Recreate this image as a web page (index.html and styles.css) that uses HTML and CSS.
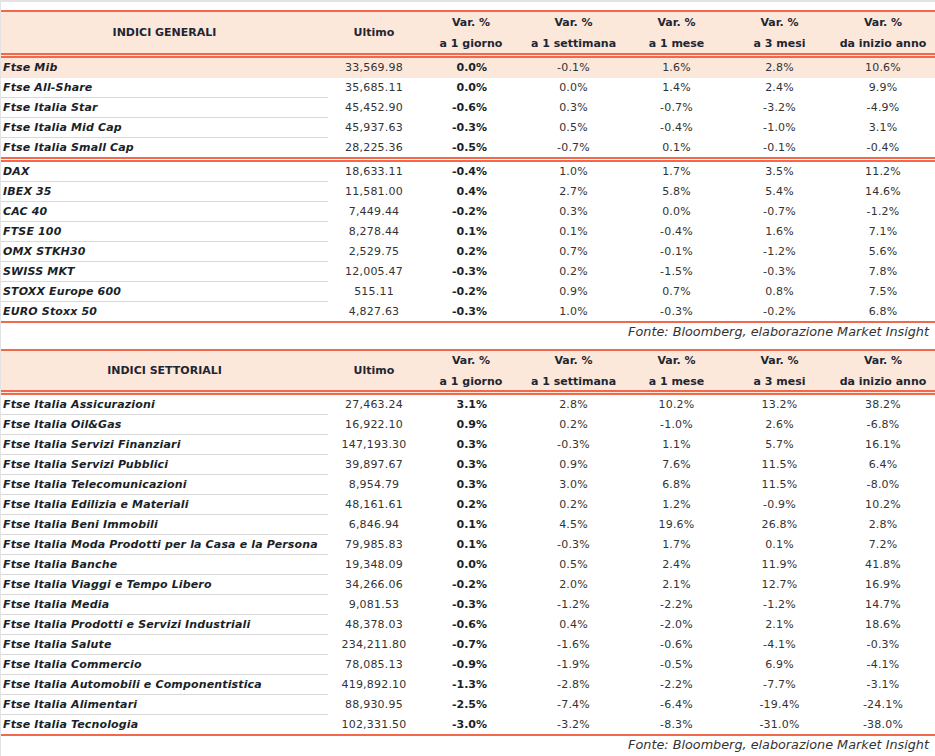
FILE: index.html
```html
<!DOCTYPE html>
<html lang="it">
<head>
<meta charset="utf-8">
<title>Indici</title>
<link rel="stylesheet" href="styles.css">
</head>
<body>
<div class="page">
  <table class="idx">
    <colgroup>
      <col class="c-name"><col class="c-last"><col class="c-d1"><col class="c-w"><col class="c-m"><col class="c-m"><col class="c-y">
    </colgroup>
    <thead>
      <tr>
        <th><div class="hd">INDICI GENERALI</div></th>
        <th><div class="hd">Ultimo</div></th>
        <th><div class="hd"><span>Var. %</span><span>a 1 giorno</span></div></th>
        <th><div class="hd"><span>Var. %</span><span>a 1 settimana</span></div></th>
        <th><div class="hd"><span>Var. %</span><span>a 1 mese</span></div></th>
        <th><div class="hd"><span>Var. %</span><span>a 3 mesi</span></div></th>
        <th><div class="hd"><span>Var. %</span><span>da inizio anno</span></div></th>
      </tr>
    </thead>
    <tbody>
      <tr class="hl"><td class="name">Ftse Mib</td><td>33,569.98</td><td class="d1">0.0%</td><td>-0.1%</td><td>1.6%</td><td>2.8%</td><td>10.6%</td></tr>
      <tr><td class="name">Ftse All-Share</td><td>35,685.11</td><td class="d1">0.0%</td><td>0.0%</td><td>1.4%</td><td>2.4%</td><td>9.9%</td></tr>
      <tr><td class="name">Ftse Italia Star</td><td>45,452.90</td><td class="d1">-0.6%</td><td>0.3%</td><td>-0.7%</td><td>-3.2%</td><td>-4.9%</td></tr>
      <tr><td class="name">Ftse Italia Mid Cap</td><td>45,937.63</td><td class="d1">-0.3%</td><td>0.5%</td><td>-0.4%</td><td>-1.0%</td><td>3.1%</td></tr>
      <tr class="end"><td class="name">Ftse Italia Small Cap</td><td>28,225.36</td><td class="d1">-0.5%</td><td>-0.7%</td><td>0.1%</td><td>-0.1%</td><td>-0.4%</td></tr>
      <tr><td class="name">DAX</td><td>18,633.11</td><td class="d1">-0.4%</td><td>1.0%</td><td>1.7%</td><td>3.5%</td><td>11.2%</td></tr>
      <tr><td class="name">IBEX 35</td><td>11,581.00</td><td class="d1">0.4%</td><td>2.7%</td><td>5.8%</td><td>5.4%</td><td>14.6%</td></tr>
      <tr><td class="name">CAC 40</td><td>7,449.44</td><td class="d1">-0.2%</td><td>0.3%</td><td>0.0%</td><td>-0.7%</td><td>-1.2%</td></tr>
      <tr><td class="name">FTSE 100</td><td>8,278.44</td><td class="d1">0.1%</td><td>0.1%</td><td>-0.4%</td><td>1.6%</td><td>7.1%</td></tr>
      <tr><td class="name">OMX STKH30</td><td>2,529.75</td><td class="d1">0.2%</td><td>0.7%</td><td>-0.1%</td><td>-1.2%</td><td>5.6%</td></tr>
      <tr><td class="name">SWISS MKT</td><td>12,005.47</td><td class="d1">-0.3%</td><td>0.2%</td><td>-1.5%</td><td>-0.3%</td><td>7.8%</td></tr>
      <tr><td class="name">STOXX Europe 600</td><td>515.11</td><td class="d1">-0.2%</td><td>0.9%</td><td>0.7%</td><td>0.8%</td><td>7.5%</td></tr>
      <tr class="last"><td class="name">EURO Stoxx 50</td><td>4,827.63</td><td class="d1">-0.3%</td><td>1.0%</td><td>-0.3%</td><td>-0.2%</td><td>6.8%</td></tr>
    </tbody>
  </table>
  <p class="source">Fonte: Bloomberg, elaborazione Market Insight</p>

  <table class="idx idx2">
    <colgroup>
      <col class="c-name"><col class="c-last"><col class="c-d1"><col class="c-w"><col class="c-m"><col class="c-m"><col class="c-y">
    </colgroup>
    <thead>
      <tr>
        <th><div class="hd">INDICI SETTORIALI</div></th>
        <th><div class="hd">Ultimo</div></th>
        <th><div class="hd"><span>Var. %</span><span>a 1 giorno</span></div></th>
        <th><div class="hd"><span>Var. %</span><span>a 1 settimana</span></div></th>
        <th><div class="hd"><span>Var. %</span><span>a 1 mese</span></div></th>
        <th><div class="hd"><span>Var. %</span><span>a 3 mesi</span></div></th>
        <th><div class="hd"><span>Var. %</span><span>da inizio anno</span></div></th>
      </tr>
    </thead>
    <tbody>
      <tr><td class="name">Ftse Italia Assicurazioni</td><td>27,463.24</td><td class="d1">3.1%</td><td>2.8%</td><td>10.2%</td><td>13.2%</td><td>38.2%</td></tr>
      <tr><td class="name">Ftse Italia Oil&amp;Gas</td><td>16,922.10</td><td class="d1">0.9%</td><td>0.2%</td><td>-1.0%</td><td>2.6%</td><td>-6.8%</td></tr>
      <tr><td class="name">Ftse Italia Servizi Finanziari</td><td>147,193.30</td><td class="d1">0.3%</td><td>-0.3%</td><td>1.1%</td><td>5.7%</td><td>16.1%</td></tr>
      <tr><td class="name">Ftse Italia Servizi Pubblici</td><td>39,897.67</td><td class="d1">0.3%</td><td>0.9%</td><td>7.6%</td><td>11.5%</td><td>6.4%</td></tr>
      <tr><td class="name">Ftse Italia Telecomunicazioni</td><td>8,954.79</td><td class="d1">0.3%</td><td>3.0%</td><td>6.8%</td><td>11.5%</td><td>-8.0%</td></tr>
      <tr><td class="name">Ftse Italia Edilizia e Materiali</td><td>48,161.61</td><td class="d1">0.2%</td><td>0.2%</td><td>1.2%</td><td>-0.9%</td><td>10.2%</td></tr>
      <tr><td class="name">Ftse Italia Beni Immobili</td><td>6,846.94</td><td class="d1">0.1%</td><td>4.5%</td><td>19.6%</td><td>26.8%</td><td>2.8%</td></tr>
      <tr><td class="name">Ftse Italia Moda Prodotti per la Casa e la Persona</td><td>79,985.83</td><td class="d1">0.1%</td><td>-0.3%</td><td>1.7%</td><td>0.1%</td><td>7.2%</td></tr>
      <tr><td class="name">Ftse Italia Banche</td><td>19,348.09</td><td class="d1">0.0%</td><td>0.5%</td><td>2.4%</td><td>11.9%</td><td>41.8%</td></tr>
      <tr><td class="name">Ftse Italia Viaggi e Tempo Libero</td><td>34,266.06</td><td class="d1">-0.2%</td><td>2.0%</td><td>2.1%</td><td>12.7%</td><td>16.9%</td></tr>
      <tr><td class="name">Ftse Italia Media</td><td>9,081.53</td><td class="d1">-0.3%</td><td>-1.2%</td><td>-2.2%</td><td>-1.2%</td><td>14.7%</td></tr>
      <tr><td class="name">Ftse Italia Prodotti e Servizi Industriali</td><td>48,378.03</td><td class="d1">-0.6%</td><td>0.4%</td><td>-2.0%</td><td>2.1%</td><td>18.6%</td></tr>
      <tr><td class="name">Ftse Italia Salute</td><td>234,211.80</td><td class="d1">-0.7%</td><td>-1.6%</td><td>-0.6%</td><td>-4.1%</td><td>-0.3%</td></tr>
      <tr><td class="name">Ftse Italia Commercio</td><td>78,085.13</td><td class="d1">-0.9%</td><td>-1.9%</td><td>-0.5%</td><td>6.9%</td><td>-4.1%</td></tr>
      <tr><td class="name">Ftse Italia Automobili e Componentistica</td><td>419,892.10</td><td class="d1">-1.3%</td><td>-2.8%</td><td>-2.2%</td><td>-7.7%</td><td>-3.1%</td></tr>
      <tr><td class="name">Ftse Italia Alimentari</td><td>88,930.95</td><td class="d1">-2.5%</td><td>-7.4%</td><td>-6.4%</td><td>-19.4%</td><td>-24.1%</td></tr>
      <tr class="last"><td class="name">Ftse Italia Tecnologia</td><td>102,331.50</td><td class="d1">-3.0%</td><td>-3.2%</td><td>-8.3%</td><td>-31.0%</td><td>-38.0%</td></tr>
    </tbody>
  </table>
  <p class="source">Fonte: Bloomberg, elaborazione Market Insight</p>
</div>
</body>
</html>
```

FILE: styles.css
```css
html, body {
  margin: 0;
  padding: 0;
  background: #ffffff;
}

.page {
  width: 934px;
  height: 754px;
  border-top: 2px solid #e3e3e3;
  border-left: 1px solid #e3e3e3;
  padding-top: 8px;
  font-family: "DejaVu Sans", "Liberation Sans", sans-serif;
  font-size: 11px;
  color: #2a2a2a;
  overflow: hidden;
}

.idx {
  width: 934px;
  table-layout: fixed;
  border-collapse: separate;
  border-spacing: 0;
}

.c-name { width: 327px; }
.c-last { width: 92px; }
.c-d1 { width: 102px; }
.c-w { width: 103px; }
.c-m { width: 103px; }
.c-y { width: 104px; }

.idx th {
  background: #fce8da;
  border-top: 2px solid #f2684c;
  border-bottom: 5px double #f2684c;
  padding: 0;
  font-weight: bold;
  font-size: 11px;
  color: #1e2633;
  text-align: center;
}

.hd {
  height: 41px;
  display: flex;
  flex-direction: column;
  justify-content: center;
  align-items: center;
  line-height: 21px;
  white-space: nowrap;
}

.idx2 .hd {
  height: 39px;
}

.idx td {
  padding: 0;
  line-height: 19px;
  white-space: nowrap;
  text-align: center;
  border-bottom: 1px solid transparent;
  color: #333333;
  letter-spacing: 0.2px;
}

.idx td.name {
  text-align: left;
  padding-left: 2px;
  font-weight: bold;
  font-style: italic;
  color: #1a1f29;
  border-bottom-color: #d9d9d9;
  letter-spacing: 0.15px;
}

.idx td.d1 {
  text-align: right;
  padding-right: 35px;
  font-weight: bold;
  color: #1a1f29;
  letter-spacing: 0;
}

.idx tr.hl td {
  background: #fce8da;
  border-bottom-color: #fce8da;
}

.idx tr.end td {
  border-bottom: 5px double #f2684c;
}

.idx tr.last td {
  border-bottom: 2px solid #f2684c;
}

.source {
  margin: 0;
  height: 26px;
  line-height: 18px;
  font-size: 12.8px;
  text-align: right;
  padding-right: 6px;
  font-style: italic;
  color: #333333;
}
```
